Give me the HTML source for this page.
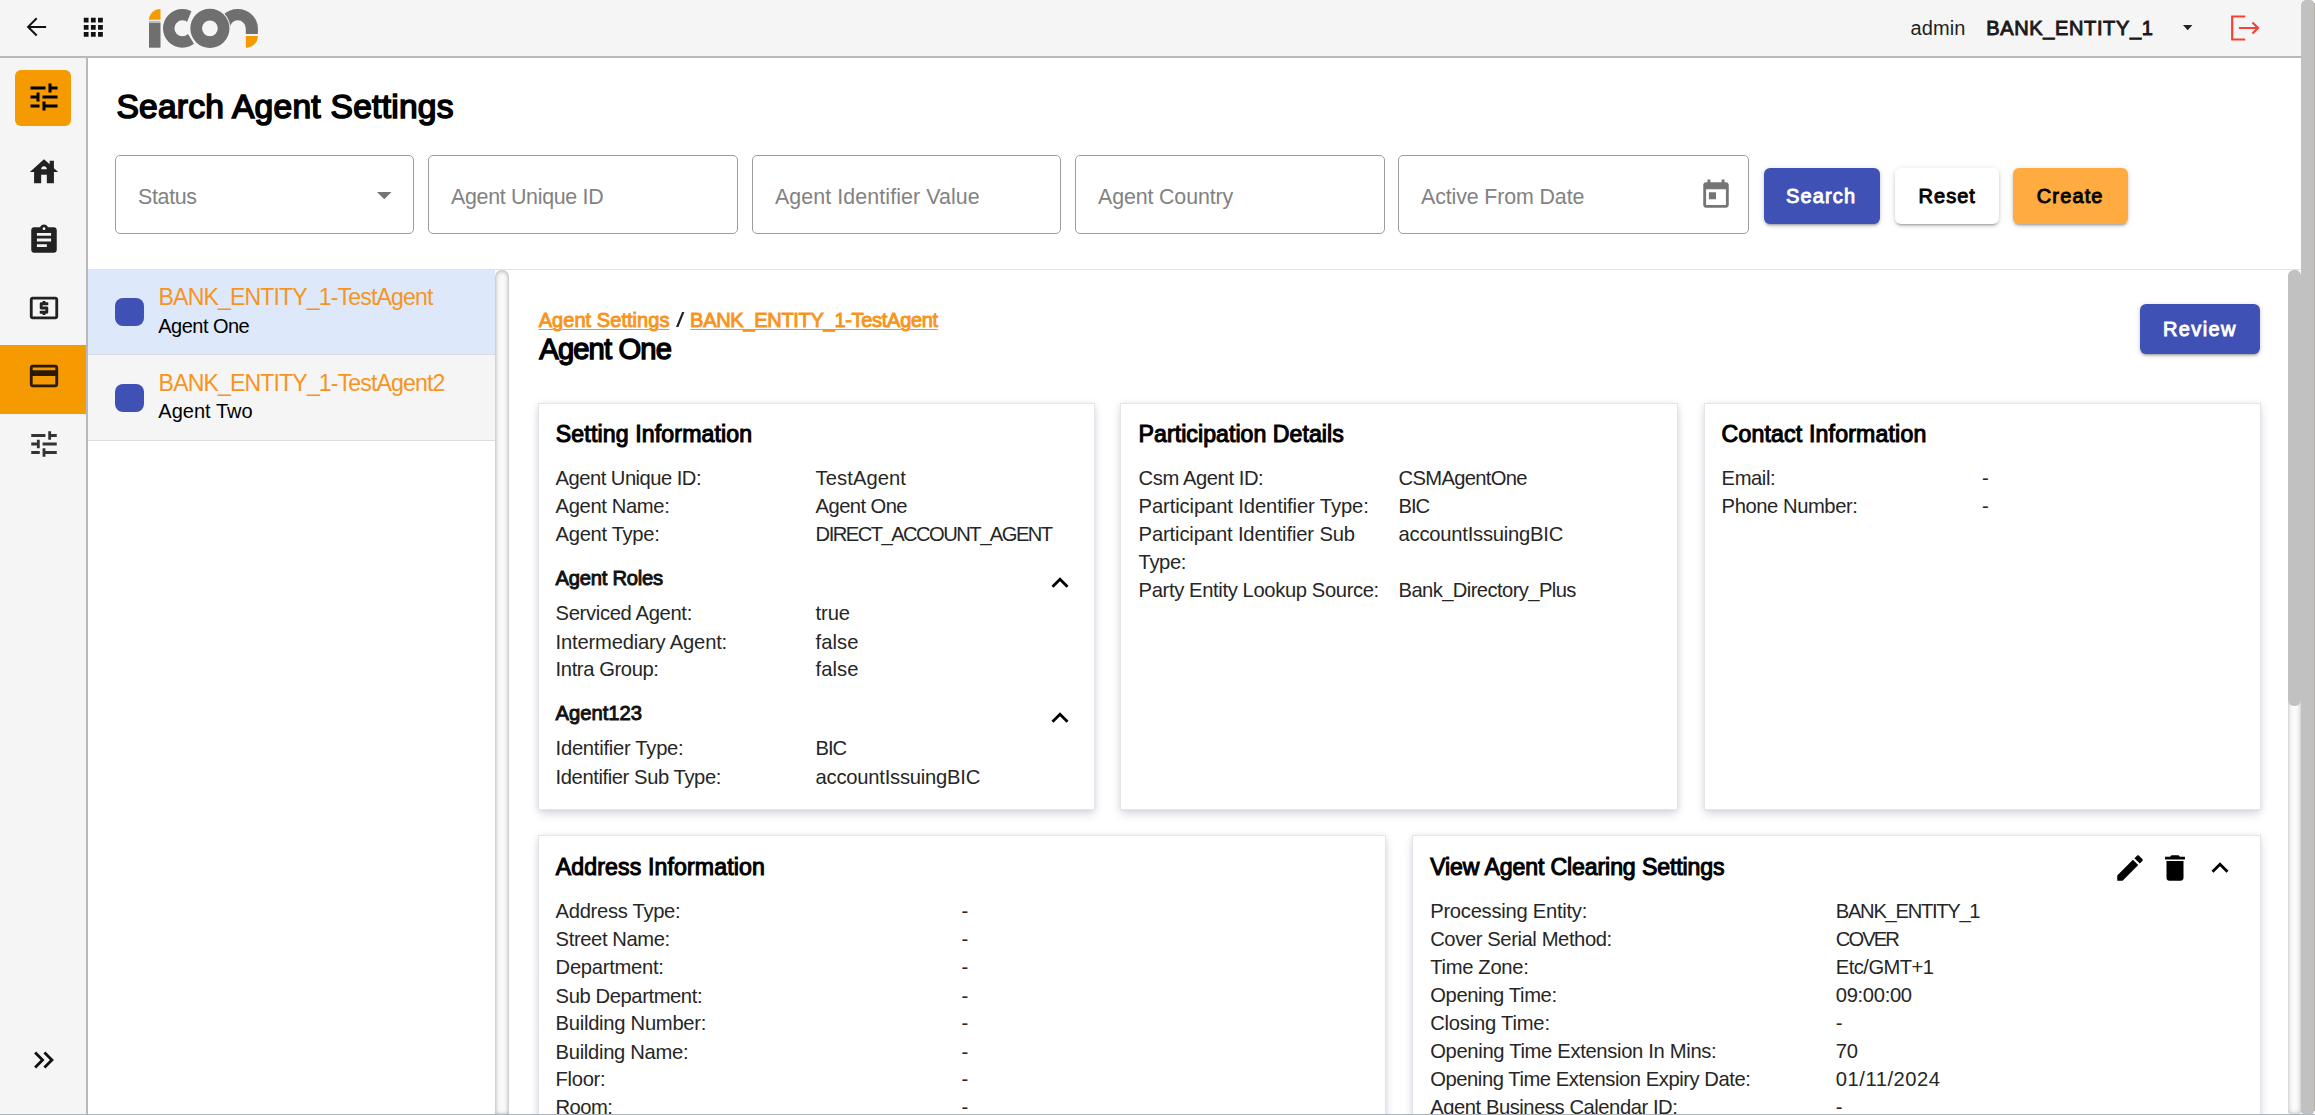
<!DOCTYPE html>
<html>
<head>
<meta charset="utf-8">
<title>Search Agent Settings</title>
<style>
*{box-sizing:border-box;margin:0;padding:0}
html,body{width:2315px;height:1115px;overflow:hidden;background:#fff}
body{font-family:"Liberation Sans",sans-serif;color:#000;position:relative}
.abs{position:absolute}
svg{display:block;overflow:visible}
#hdr{left:0;top:0;width:2301px;height:58px;background:#f5f5f5;border-bottom:2px solid #b9b9b9}
#side{left:0;top:58px;width:88px;height:1057px;background:#f5f5f5;border-right:2px solid #b9b9b9}
#bottomline{left:0;top:1114px;width:2315px;height:1px;background:#afb3b9}
#oscroll{left:2301px;top:0;width:14px;height:1115px;background:#fff}
#oscroll i{position:absolute;left:0;top:0;width:13px;height:1114px;background:#c1c1c1;border-radius:5px 4px 3px 3px}
#oscroll b{position:absolute;left:13px;top:3px;width:1px;height:1108px;background:#b4b0a6}
.t{position:absolute;white-space:nowrap;line-height:1}
.inp{position:absolute;top:155px;height:79px;border:1px solid #9d9d9d;border-radius:5px;background:#fff}
.btn{position:absolute;top:168px;height:56px;border-radius:6px;box-shadow:0 3px 2px -2px rgba(0,0,0,.2),0 2px 3px 0 rgba(0,0,0,.14),0 1px 6px 0 rgba(0,0,0,.12)}
.card{position:absolute;background:#fff;border:1px solid #e3e5ea;box-shadow:0 5px 9px -1px rgba(70,80,110,.2),0 0 6px rgba(70,80,110,.1)}
.sq{position:absolute;width:29px;height:28px;border-radius:8px;background:#3f51b5}
</style>
</head>
<body>
<div id="hdr" class="abs"></div>
<div id="side" class="abs"></div>
<svg class="abs" style="left:20px;top:10px" width="34" height="34" viewBox="0 0 34 34"><path d="M26.100 16.900H8.400M16.700 8.300L8.100 16.900L16.700 25.500" fill="none" stroke="#111" stroke-width="2"/></svg>
<svg class="abs" style="left:79.20px;top:12.60px" width="28.6" height="28.6" viewBox="0 0 24 24"><path fill="#111" d="M4 8h4V4H4v4zm6 12h4v-4h-4v4zm-6 0h4v-4H4v4zm0-6h4v-4H4v4zm6 0h4v-4h-4v4zm6-10v4h4V4h-4zm-6 4h4V4h-4v4zm6 6h4v-4h-4v4zm0 6h4v-4h-4v4z"/></svg>
<svg class="abs" style="left:140px;top:0" width="130" height="58" viewBox="0 0 130 58">
<defs><mask id="mo" maskUnits="userSpaceOnUse" x="0" y="0" width="130" height="58"><rect width="130" height="58" fill="#fff"/><circle cx="69.9" cy="28.35" r="20.5" fill="#000"/></mask><mask id="mc" maskUnits="userSpaceOnUse" x="0" y="0" width="130" height="58"><rect width="130" height="58" fill="#fff"/><circle cx="69.9" cy="28.35" r="20.5" fill="#000"/><path d="M44.500 28L59.800 -9H90V62H64.800Z" fill="#000"/></mask></defs>
<path d="M9 19.8A11.5 10.8 0 0 1 20.5 9V19.8Z" fill="#f59a00"/>
<rect x="9" y="20.8" width="11.5" height="2.2" fill="#bdbdbd"/>
<rect x="9" y="23" width="11.5" height="24.7" fill="#6f6f6f"/>
<path mask="url(#mc)" fill="#6f6f6f" fill-rule="evenodd" d="M23 28.35a19.4 19.4 0 1 0 38.800 0a19.4 19.4 0 1 0 -38.800 0ZM34.4 28.35a8 8 0 1 0 16 0a8 8 0 1 0 -16 0Z"/>
<g mask="url(#mo)" fill="#6f6f6f">
<path d="M77.500 28.35A20.200 19.35 0 0 1 117.900 28.35V34H105.800V28.35A8.05 8.05 0 0 0 89.700 28.35Z"/>
</g>
<path fill="#6f6f6f" fill-rule="evenodd" d="M50.300 28.35a19.6 19.6 0 1 0 39.200 0a19.6 19.6 0 1 0 -39.200 0ZM62 28.35a7.900 7.900 0 1 0 15.800 0a7.900 7.900 0 1 0 -15.800 0Z"/>
<path d="M105.800 35.900H117.900A12.100 11.800 0 0 1 105.800 47.700Z" fill="#f59a00"/>
</svg>
<div class="t" style="left:1910.40px;top:18.47px;font-size:20px;color:#222;letter-spacing:0.145px;">admin</div>
<div class="t" style="left:1986.30px;top:18.47px;font-size:20px;color:#1a1a1a;-webkit-text-stroke:0.92px #1a1a1a;letter-spacing:0.627px;">BANK_ENTITY_1</div>
<svg class="abs" style="left:2183px;top:25px" width="9.4" height="5.4" viewBox="0 0 10 5.5"><path d="M0 0H10L5 5.500Z" fill="#222"/></svg>
<svg class="abs" style="left:2228px;top:12px" width="34" height="32" viewBox="0 0 34 32"><g fill="none" stroke="#f44336" stroke-width="2.200"><path d="M17.200 4.500H4.200V27.500H17.200"/><path d="M11 16H30M24.500 10.500L30 16L24.500 21.500"/></g></svg>
<div class="abs" style="left:15px;top:70px;width:56px;height:56px;border-radius:6px;background:#f59a00"></div>
<div class="abs" style="left:0;top:345px;width:86px;height:69px;background:#f59a00"></div>
<svg class="abs" style="left:25.85px;top:79.30px" width="36" height="36" viewBox="0 0 24 24"><path fill="#000" d="M3 17v2h6v-2H3zM3 5v2h10V5H3zm10 16v-2h8v-2h-8v-2h-2v6h2zM7 9v2H3v2h4v2h2V9H7zm14 4v-2H11v2h10zm-6-4h2V7h4V5h-4V3h-2v6z"/></svg>
<svg class="abs" style="left:27.05px;top:155.30px" width="34" height="34" viewBox="0 0 24 24"><path fill="#222" d="M19 9.3V4h-3v2.6L12 3 2 12h3v8h5v-6h4v6h5v-8h3l-3-2.7zM10 10c0-1.1.9-2 2-2s2 .9 2 2h-4z"/></svg>
<svg class="abs" style="left:26.70px;top:222.70px" width="34" height="34" viewBox="0 0 24 24"><path fill="#222" d="M19 3h-4.18C14.4 1.84 13.3 1 12 1c-1.3 0-2.4.84-2.82 2H5c-1.1 0-2 .9-2 2v14c0 1.1.9 2 2 2h14c1.1 0 2-.9 2-2V5c0-1.1-.9-2-2-2zm-7 0c.55 0 1 .45 1 1s-.45 1-1 1-1-.45-1-1 .45-1 1-1zm2 14H7v-2h7v2zm3-4H7v-2h10v2zm0-4H7V7h10v2z"/></svg>
<svg class="abs" style="left:27.10px;top:290.70px" width="34" height="34" viewBox="0 0 24 24"><path fill="#222" d="M11 17h2v-1h1c.55 0 1-.45 1-1v-3c0-.55-.45-1-1-1h-3v-1h4V8h-2V7h-2v1h-1c-.55 0-1 .45-1 1v3c0 .55.45 1 1 1h3v1H9v2h2v1zm9-13H4c-1.11 0-1.99.89-1.99 2L2 18c0 1.11.89 2 2 2h16c1.11 0 2-.89 2-2V6c0-1.11-.89-2-2-2zm0 14H4V6h16v12z"/></svg>
<svg class="abs" style="left:27.10px;top:358.80px" width="34" height="34" viewBox="0 0 24 24"><path fill="#2a1a00" d="M20 4H4c-1.11 0-1.99.89-1.99 2L2 18c0 1.11.89 2 2 2h16c1.11 0 2-.89 2-2V6c0-1.11-.89-2-2-2zm0 14H4v-6h16v6zm0-10H4V6h16v2z"/></svg>
<svg class="abs" style="left:26.70px;top:427.00px" width="34" height="34" viewBox="0 0 24 24"><path fill="#333" d="M3 17v2h6v-2H3zM3 5v2h10V5H3zm10 16v-2h8v-2h-8v-2h-2v6h2zM7 9v2H3v2h4v2h2V9H7zm14 4v-2H11v2h10zm-6-4h2V7h4V5h-4V3h-2v6z"/></svg>
<svg class="abs" style="left:27.20px;top:1042.50px" width="34" height="34" viewBox="0 0 24 24"><path fill="#111" d="M6.41 6L5 7.41 9.58 12 5 16.59 6.41 18l6-6z M13 6l-1.41 1.41L16.17 12l-4.58 4.59L13 18l6-6z"/></svg>
<div class="t" style="left:116.40px;top:90.46px;font-size:33.6px;color:#000;-webkit-text-stroke:1.55px #000;letter-spacing:0.245px;">Search Agent Settings</div>
<div class="inp" style="left:115px;width:299px"></div>
<div class="t" style="left:138.00px;top:186.88px;font-size:21.4px;color:#828282;letter-spacing:-0.326px;">Status</div>
<div class="inp" style="left:428px;width:310px"></div>
<div class="t" style="left:451.00px;top:186.88px;font-size:21.4px;color:#828282;letter-spacing:-0.310px;">Agent Unique ID</div>
<div class="inp" style="left:752px;width:309px"></div>
<div class="t" style="left:775.00px;top:186.88px;font-size:21.4px;color:#828282;letter-spacing:0.081px;">Agent Identifier Value</div>
<div class="inp" style="left:1075px;width:310px"></div>
<div class="t" style="left:1098.00px;top:186.88px;font-size:21.4px;color:#828282;letter-spacing:-0.131px;">Agent Country</div>
<div class="inp" style="left:1398px;width:351px"></div>
<div class="t" style="left:1421.00px;top:186.88px;font-size:21.4px;color:#828282;letter-spacing:-0.125px;">Active From Date</div>
<svg class="abs" style="left:376.500px;top:192px" width="14.500" height="7.500" viewBox="0 0 14.500 7.500"><path d="M0 0H14.500L7.250 7.250Z" fill="#757575"/></svg>
<svg class="abs" style="left:1699.00px;top:178.00px" width="34" height="34" viewBox="0 0 24 24"><path fill="#757575" d="M19 3h-1V1h-2v2H8V1H6v2H5c-1.11 0-1.99.9-1.99 2L3 19c0 1.1.89 2 2 2h14c1.1 0 2-.9 2-2V5c0-1.1-.9-2-2-2zm0 16H5V8h14v11zM7 10h5v5H7z"/></svg>
<div class="btn" style="left:1764px;width:116px;background:#3f51b5"></div>
<div class="btn" style="left:1895px;width:104px;background:#fff"></div>
<div class="btn" style="left:2013px;width:115px;background:#ffab40"></div>
<div class="t" style="left:1786.00px;top:186.17px;font-size:20px;color:#fff;-webkit-text-stroke:0.92px #fff;letter-spacing:1.138px;">Search</div>
<div class="t" style="left:1918.60px;top:186.17px;font-size:20px;color:#000;-webkit-text-stroke:0.92px #000;letter-spacing:0.991px;">Reset</div>
<div class="t" style="left:2036.80px;top:186.17px;font-size:20px;color:#000;-webkit-text-stroke:0.92px #000;letter-spacing:1.128px;">Create</div>
<div class="abs" style="left:88px;top:269px;width:2213px;height:1px;background:#e3e3e3"></div>
<div class="abs" style="left:88px;top:270px;width:407px;height:85px;background:#dde9fb;border-bottom:1px solid #d9dde3"></div>
<div class="abs" style="left:88px;top:355px;width:407px;height:86px;background:#f5f5f5;border-bottom:1px solid #dedede"></div>
<div class="sq" style="left:115px;top:298px"></div>
<div class="sq" style="left:115px;top:384px"></div>
<div class="t" style="left:158.60px;top:285.55px;font-size:23.1px;color:#f7941d;letter-spacing:-0.873px;">BANK_ENTITY_1-TestAgent</div>
<div class="t" style="left:158.30px;top:315.87px;font-size:20px;color:#000;letter-spacing:-0.525px;">Agent One</div>
<div class="t" style="left:158.60px;top:371.85px;font-size:23.1px;color:#f7941d;letter-spacing:-0.868px;">BANK_ENTITY_1-TestAgent2</div>
<div class="t" style="left:158.30px;top:401.07px;font-size:20px;color:#000;letter-spacing:0.027px;">Agent Two</div>
<div class="abs" style="left:495px;top:270px;width:14px;height:845px;border-radius:7px 7px 0 0;background:#fafafa;box-shadow:inset 0 0 5px rgba(0,0,0,.38)"></div>
<div class="abs" style="left:2288px;top:270px;width:13px;height:844px;border-radius:7px 7px 3px 3px;background:#fbfbfb;box-shadow:inset 0 0 5px rgba(0,0,0,.3)"></div>
<div class="abs" style="left:2288px;top:270px;width:13px;height:436px;border-radius:6px;background:#c1c1c1"></div>
<div class="t" style="left:538.70px;top:310.37px;font-size:20px;color:#f7941d;-webkit-text-stroke:0.92px #f7941d;letter-spacing:0.051px;"><span style="text-decoration:underline;text-decoration-thickness:1.2px;text-underline-offset:1.500px">Agent Settings</span></div>
<div class="t" style="left:675.60px;top:310.20px;font-size:20.2px;color:#222;"><span style="display:inline-block;transform:scaleX(1.5);transform-origin:0 0">/</span></div>
<div class="t" style="left:690.10px;top:310.37px;font-size:20px;color:#f7941d;-webkit-text-stroke:0.92px #f7941d;letter-spacing:-0.294px;"><span style="text-decoration:underline;text-decoration-thickness:1.2px;text-underline-offset:1.500px">BANK_ENTITY_1-TestAgent</span></div>
<div class="t" style="left:539.30px;top:335.08px;font-size:29.2px;color:#000;-webkit-text-stroke:1.34px #000;letter-spacing:-0.869px;">Agent One</div>
<div class="btn" style="left:2140px;top:304px;width:120px;height:50px;background:#3f51b5"></div>
<div class="t" style="left:2163.00px;top:319.47px;font-size:20px;color:#fff;-webkit-text-stroke:0.92px #fff;letter-spacing:1.367px;">Review</div>
<div class="card" style="left:538px;top:403px;width:557px;height:407px"></div>
<div class="card" style="left:1120px;top:403px;width:558px;height:407px"></div>
<div class="card" style="left:1704px;top:403px;width:557px;height:407px"></div>
<div class="card" style="left:538px;top:835px;width:848px;height:330px"></div>
<div class="card" style="left:1412px;top:835px;width:849px;height:330px"></div>
<div class="t" style="left:555.80px;top:423.35px;font-size:23.1px;color:#000;-webkit-text-stroke:1.06px #000;letter-spacing:0.142px;">Setting Information</div>
<div class="t" style="left:555.60px;top:468.10px;font-size:20.2px;color:#262626;letter-spacing:-0.522px;">Agent Unique ID:</div>
<div class="t" style="left:815.60px;top:468.10px;font-size:20.2px;color:#262626;letter-spacing:0.075px;">TestAgent</div>
<div class="t" style="left:555.60px;top:496.10px;font-size:20.2px;color:#262626;letter-spacing:-0.367px;">Agent Name:</div>
<div class="t" style="left:815.60px;top:496.10px;font-size:20.2px;color:#262626;letter-spacing:-0.570px;">Agent One</div>
<div class="t" style="left:555.60px;top:524.10px;font-size:20.2px;color:#262626;letter-spacing:-0.317px;">Agent Type:</div>
<div class="t" style="left:815.60px;top:524.10px;font-size:20.2px;color:#262626;letter-spacing:-1.546px;">DIRECT_ACCOUNT_AGENT</div>
<div class="t" style="left:555.60px;top:568.00px;font-size:20.2px;color:#111;-webkit-text-stroke:0.93px #111;letter-spacing:-0.255px;">Agent Roles</div>
<svg class="abs" style="left:1042.50px;top:566.30px" width="34" height="34" viewBox="0 0 24 24"><path fill="#000" d="M12 8l-6 6 1.41 1.41L12 10.83l4.59 4.58L18 14z"/></svg>
<div class="t" style="left:555.60px;top:603.30px;font-size:20.2px;color:#262626;letter-spacing:-0.340px;">Serviced Agent:</div>
<div class="t" style="left:815.60px;top:603.30px;font-size:20.2px;color:#262626;letter-spacing:-0.097px;">true</div>
<div class="t" style="left:555.60px;top:632.30px;font-size:20.2px;color:#262626;letter-spacing:-0.192px;">Intermediary Agent:</div>
<div class="t" style="left:815.60px;top:632.30px;font-size:20.2px;color:#262626;letter-spacing:0.060px;">false</div>
<div class="t" style="left:555.60px;top:659.30px;font-size:20.2px;color:#262626;letter-spacing:-0.398px;">Intra Group:</div>
<div class="t" style="left:815.60px;top:659.30px;font-size:20.2px;color:#262626;letter-spacing:0.060px;">false</div>
<div class="t" style="left:555.60px;top:703.10px;font-size:20.2px;color:#111;-webkit-text-stroke:0.93px #111;letter-spacing:-0.008px;">Agent123</div>
<svg class="abs" style="left:1042.50px;top:701.20px" width="34" height="34" viewBox="0 0 24 24"><path fill="#000" d="M12 8l-6 6 1.41 1.41L12 10.83l4.59 4.58L18 14z"/></svg>
<div class="t" style="left:555.60px;top:738.30px;font-size:20.2px;color:#262626;letter-spacing:-0.264px;">Identifier Type:</div>
<div class="t" style="left:815.60px;top:738.30px;font-size:20.2px;color:#262626;letter-spacing:-1.067px;">BIC</div>
<div class="t" style="left:555.60px;top:767.30px;font-size:20.2px;color:#262626;letter-spacing:-0.414px;">Identifier Sub Type:</div>
<div class="t" style="left:815.60px;top:767.30px;font-size:20.2px;color:#262626;letter-spacing:-0.228px;">accountIssuingBIC</div>
<div class="t" style="left:1138.60px;top:423.35px;font-size:23.1px;color:#000;-webkit-text-stroke:1.06px #000;letter-spacing:0.054px;">Participation Details</div>
<div class="t" style="left:1138.60px;top:468.10px;font-size:20.2px;color:#262626;letter-spacing:-0.417px;">Csm Agent ID:</div>
<div class="t" style="left:1398.60px;top:468.10px;font-size:20.2px;color:#262626;letter-spacing:-0.685px;">CSMAgentOne</div>
<div class="t" style="left:1138.60px;top:496.10px;font-size:20.2px;color:#262626;letter-spacing:-0.106px;">Participant Identifier Type:</div>
<div class="t" style="left:1398.60px;top:496.10px;font-size:20.2px;color:#262626;letter-spacing:-1.067px;">BIC</div>
<div class="t" style="left:1138.60px;top:524.10px;font-size:20.2px;color:#262626;letter-spacing:-0.140px;">Participant Identifier Sub</div>
<div class="t" style="left:1398.60px;top:524.10px;font-size:20.2px;color:#262626;letter-spacing:-0.228px;">accountIssuingBIC</div>
<div class="t" style="left:1138.60px;top:552.10px;font-size:20.2px;color:#262626;letter-spacing:-0.405px;">Type:</div>
<div class="t" style="left:1138.60px;top:580.10px;font-size:20.2px;color:#262626;letter-spacing:-0.371px;">Party Entity Lookup Source:</div>
<div class="t" style="left:1398.60px;top:580.10px;font-size:20.2px;color:#262626;letter-spacing:-0.596px;">Bank_Directory_Plus</div>
<div class="t" style="left:1721.60px;top:423.35px;font-size:23.1px;color:#000;-webkit-text-stroke:1.06px #000;letter-spacing:0.174px;">Contact Information</div>
<div class="t" style="left:1721.60px;top:468.10px;font-size:20.2px;color:#262626;letter-spacing:-0.427px;">Email:</div>
<div class="t" style="left:1982.00px;top:468.10px;font-size:20.2px;color:#262626;letter-spacing:-1.287px;">-</div>
<div class="t" style="left:1721.60px;top:496.10px;font-size:20.2px;color:#262626;letter-spacing:-0.429px;">Phone Number:</div>
<div class="t" style="left:1982.00px;top:496.10px;font-size:20.2px;color:#262626;letter-spacing:-1.287px;">-</div>
<div class="t" style="left:555.80px;top:856.05px;font-size:23.1px;color:#000;-webkit-text-stroke:1.06px #000;letter-spacing:0.129px;">Address Information</div>
<div class="t" style="left:555.60px;top:901.00px;font-size:20.2px;color:#262626;letter-spacing:-0.303px;">Address Type:</div>
<div class="t" style="left:961.40px;top:901.00px;font-size:20.2px;color:#262626;letter-spacing:-1.287px;">-</div>
<div class="t" style="left:555.60px;top:929.00px;font-size:20.2px;color:#262626;letter-spacing:-0.391px;">Street Name:</div>
<div class="t" style="left:961.40px;top:929.00px;font-size:20.2px;color:#262626;letter-spacing:-1.287px;">-</div>
<div class="t" style="left:555.60px;top:957.00px;font-size:20.2px;color:#262626;letter-spacing:-0.277px;">Department:</div>
<div class="t" style="left:961.40px;top:957.00px;font-size:20.2px;color:#262626;letter-spacing:-1.287px;">-</div>
<div class="t" style="left:555.60px;top:986.00px;font-size:20.2px;color:#262626;letter-spacing:-0.407px;">Sub Department:</div>
<div class="t" style="left:961.40px;top:986.00px;font-size:20.2px;color:#262626;letter-spacing:-1.287px;">-</div>
<div class="t" style="left:555.60px;top:1013.00px;font-size:20.2px;color:#262626;letter-spacing:-0.272px;">Building Number:</div>
<div class="t" style="left:961.40px;top:1013.00px;font-size:20.2px;color:#262626;letter-spacing:-1.287px;">-</div>
<div class="t" style="left:555.60px;top:1042.00px;font-size:20.2px;color:#262626;letter-spacing:-0.305px;">Building Name:</div>
<div class="t" style="left:961.40px;top:1042.00px;font-size:20.2px;color:#262626;letter-spacing:-1.287px;">-</div>
<div class="t" style="left:555.60px;top:1069.00px;font-size:20.2px;color:#262626;letter-spacing:-0.336px;">Floor:</div>
<div class="t" style="left:961.40px;top:1069.00px;font-size:20.2px;color:#262626;letter-spacing:-1.287px;">-</div>
<div class="t" style="left:555.60px;top:1097.00px;font-size:20.2px;color:#262626;letter-spacing:-0.562px;">Room:</div>
<div class="t" style="left:961.40px;top:1097.00px;font-size:20.2px;color:#262626;letter-spacing:-1.287px;">-</div>
<div class="t" style="left:1430.20px;top:856.05px;font-size:23.1px;color:#000;-webkit-text-stroke:1.06px #000;letter-spacing:-0.113px;">View Agent Clearing Settings</div>
<svg class="abs" style="left:2112.80px;top:850.70px" width="34" height="34" viewBox="0 0 24 24"><path fill="#000" d="M3 17.25V21h3.75L17.81 9.94l-3.75-3.75L3 17.25zM20.71 7.04c.39-.39.39-1.02 0-1.41l-2.34-2.34c-.39-.39-1.02-.39-1.41 0l-1.83 1.83 3.75 3.75 1.83-1.83z"/></svg>
<svg class="abs" style="left:2157.70px;top:850.70px" width="34" height="34" viewBox="0 0 24 24"><path fill="#000" d="M6 19c0 1.1.9 2 2 2h8c1.1 0 2-.9 2-2V7H6v12zM19 4h-3.5l-1-1h-5l-1 1H5v2h14V4z"/></svg>
<svg class="abs" style="left:2202.70px;top:851.40px" width="34" height="34" viewBox="0 0 24 24"><path fill="#000" d="M12 8l-6 6 1.41 1.41L12 10.83l4.59 4.58L18 14z"/></svg>
<div class="t" style="left:1430.20px;top:901.00px;font-size:20.2px;color:#262626;letter-spacing:-0.264px;">Processing Entity:</div>
<div class="t" style="left:1835.80px;top:901.00px;font-size:20.2px;color:#262626;letter-spacing:-1.303px;">BANK_ENTITY_1</div>
<div class="t" style="left:1430.20px;top:929.00px;font-size:20.2px;color:#262626;letter-spacing:-0.401px;">Cover Serial Method:</div>
<div class="t" style="left:1835.80px;top:929.00px;font-size:20.2px;color:#262626;letter-spacing:-1.927px;">COVER</div>
<div class="t" style="left:1430.20px;top:957.00px;font-size:20.2px;color:#262626;letter-spacing:-0.310px;">Time Zone:</div>
<div class="t" style="left:1835.80px;top:957.00px;font-size:20.2px;color:#262626;letter-spacing:-0.545px;">Etc/GMT+1</div>
<div class="t" style="left:1430.20px;top:985.00px;font-size:20.2px;color:#262626;letter-spacing:-0.367px;">Opening Time:</div>
<div class="t" style="left:1835.80px;top:985.00px;font-size:20.2px;color:#262626;letter-spacing:-0.331px;">09:00:00</div>
<div class="t" style="left:1430.20px;top:1013.00px;font-size:20.2px;color:#262626;letter-spacing:-0.206px;">Closing Time:</div>
<div class="t" style="left:1835.80px;top:1013.00px;font-size:20.2px;color:#262626;letter-spacing:-1.287px;">-</div>
<div class="t" style="left:1430.20px;top:1041.00px;font-size:20.2px;color:#262626;letter-spacing:-0.324px;">Opening Time Extension In Mins:</div>
<div class="t" style="left:1835.80px;top:1041.00px;font-size:20.2px;color:#262626;letter-spacing:-0.162px;">70</div>
<div class="t" style="left:1430.20px;top:1069.00px;font-size:20.2px;color:#262626;letter-spacing:-0.436px;">Opening Time Extension Expiry Date:</div>
<div class="t" style="left:1835.80px;top:1069.00px;font-size:20.2px;color:#262626;letter-spacing:0.523px;">01/11/2024</div>
<div class="t" style="left:1430.20px;top:1097.00px;font-size:20.2px;color:#262626;letter-spacing:-0.446px;">Agent Business Calendar ID:</div>
<div class="t" style="left:1835.80px;top:1097.00px;font-size:20.2px;color:#262626;letter-spacing:-1.287px;">-</div>
<div id="oscroll" class="abs"><i></i><b></b></div>
<div id="bottomline" class="abs"></div>
</body>
</html>
